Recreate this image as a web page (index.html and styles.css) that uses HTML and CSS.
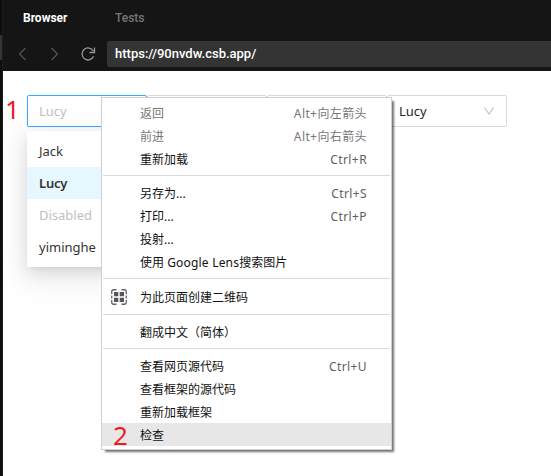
FILE: index.html
```html
<!DOCTYPE html>
<html lang="zh-CN">
<head>
<meta charset="utf-8">
<title>Browser</title>
<link rel="stylesheet" href="styles.css">
</head>
<body>
<div class="edge"><span class="edge-thumb"></span></div>
<div class="pane">
  <header class="chrome">
    <nav class="tabs"><span class="tab active">Browser</span><span class="tab">Tests</span></nav>
    <div class="toolbar">
      <svg class="nav-icon" viewBox="0 0 10 14"><path d="M7.500 1 1.500 7l6 6"/></svg>
      <svg class="nav-icon next" viewBox="0 0 10 14"><path d="M2.500 1 8.500 7l-6 6"/></svg>
      <svg class="reload" viewBox="0 0 16 16"><path d="M13.600 10.300A6 6 0 1 1 13.300 5M14.500 1.500v5H9.500"/></svg>
      <div class="address">https://90nvdw.csb.app/</div>
    </div>
  </header>
  <main class="page">
    <div class="selects">
      <div class="select focused">Lucy</div>
      <div class="select"></div>
      <div class="select"></div>
      <div class="select">Lucy<svg class="arrow" viewBox="0 0 12 10"><path d="M1.500 1.500 6 8l4.500-6.500"/></svg></div>
    </div>
  </main>
</div>
<div class="dropdown">
  <div class="option">Jack</div>
  <div class="option selected">Lucy</div>
  <div class="option disabled">Disabled</div>
  <div class="option">yiminghe</div>
</div>
<div class="menu">
  <div class="item off"><span>返回</span><kbd>Alt+向左箭头</kbd></div>
  <div class="item off"><span>前进</span><kbd>Alt+向右箭头</kbd></div>
  <div class="item"><span>重新加载</span><kbd>Ctrl+R</kbd></div>
  <div class="sep"></div>
  <div class="item"><span>另存为...</span><kbd>Ctrl+S</kbd></div>
  <div class="item"><span>打印...</span><kbd>Ctrl+P</kbd></div>
  <div class="item"><span>投射...</span></div>
  <div class="item"><span>使用 <span class="latin">Google Lens</span>搜索图片</span></div>
  <div class="sep"></div>
  <div class="item tall">
    <svg class="qr" viewBox="0 0 16 16"><path class="frame" d="M.75 5V2.500Q.75.75 2.500.75H5.500M10.500.75h3q1.750 0 1.750 1.750V5M15.250 11v2.500q0 1.750-1.750 1.750H10.500M5.500 15.250H2.500q-1.750 0-1.750-1.750V11M.75 6.500v3M15.250 6.500v3"/><path class="cells" d="M3 3h4.300v4.300H3zM8.700 3H13v4.300H8.700zM3 8.700h4.300V13H3zM8.700 8.700H13V13H8.700z"/></svg>
    <span>为此页面创建二维码</span>
  </div>
  <div class="sep"></div>
  <div class="item"><span>翻成中文（简体）</span></div>
  <div class="sep"></div>
  <div class="item"><span>查看网页源代码</span><kbd>Ctrl+U</kbd></div>
  <div class="item"><span>查看框架的源代码</span></div>
  <div class="item"><span>重新加载框架</span></div>
  <div class="item hover"><span>检查</span></div>
</div>
<span class="mark one">1</span>
<span class="mark two">2</span>
</body>
</html>
```
FILE: styles.css
```css
* { box-sizing: border-box; }
body {
  margin: 0;
  width: 551px;
  height: 476px;
  overflow: hidden;
  position: relative;
  display: flex;
  background: #fff;
  font-family: "Noto Sans", "Noto Sans CJK SC", sans-serif;
}
.edge { width: 3px; flex: none; background: #0d0d0d; border-right: 1px solid #1c1c1c; padding-top: 35px; }
.edge-thumb { display: block; width: 2px; height: 25px; background: #343434; }
.pane { flex: 1; display: flex; flex-direction: column; min-width: 0; }
.chrome { height: 71px; background: #151515; font-family: Roboto, sans-serif; }
.tabs { display: flex; height: 41px; padding-left: 20px; line-height: 36px; font-size: 12px; font-weight: 500; }
.tab { width: 92px; color: #757575; }
.tab.active { color: #fff; font-weight: 700; }
.toolbar { display: flex; align-items: center; height: 26px; padding-left: 15px; }
.nav-icon { width: 10px; height: 14px; fill: none; stroke: #555; stroke-width: 1.2; }
.nav-icon.next { margin-left: 21px; }
.reload { width: 16px; height: 16px; margin: 0 11px 0 21px; fill: none; stroke: #999; stroke-width: 1.3; }
.address {
  flex: 1;
  height: 26px;
  padding-left: 8px;
  border-radius: 2px 0 0 2px;
  background: #343434;
  color: #fff;
  font-size: 13px;
  font-weight: 500;
  line-height: 25px;
}
.page { padding: 24px; }
.selects { display: flex; }
.select {
  width: 120px;
  height: 32px;
  border: 1px solid #d9d9d9;
  border-radius: 2px;
  display: flex;
  align-items: center;
  justify-content: space-between;
  padding: 0 11px;
  font-size: 13px;
  color: #262626;
}
.select.focused { border-color: #40a9ff; color: #bfbfbf; box-shadow: 0 0 2px rgba(24, 144, 255, .2); }
.arrow { width: 12px; height: 10px; fill: none; stroke: #bfbfbf; stroke-width: 1.1; }
.dropdown {
  position: absolute;
  left: 27px;
  top: 131px;
  width: 120px;
  padding: 4px 0;
  border-radius: 2px;
  background: #fff;
  box-shadow: 0 3px 6px -4px rgba(0, 0, 0, .12), 0 6px 16px rgba(0, 0, 0, .1), 0 9px 28px 8px rgba(0, 0, 0, .06);
}
.option { height: 32px; padding-left: 12px; line-height: 32px; font-size: 13px; color: #333; }
.option.selected { background: #e6f7ff; font-weight: 600; letter-spacing: -.2px; }
.option.disabled { color: #bfbfbf; }
.menu {
  position: absolute;
  left: 101px;
  top: 97px;
  width: 291px;
  height: 353px;
  padding-top: 3px;
  border: 1px solid #d0d0d0;
  background: #fff;
  box-shadow: 3px 3px 2px -1px rgba(0, 0, 0, .55);
}
.item {
  display: flex;
  align-items: center;
  height: 23px;
  padding: 2px 24px 0 38px;
  font-size: 12px;
  line-height: 21px;
  color: #111;
  white-space: nowrap;
}
.item.tall { height: 25px; }
.item.hover { background: #e7e7e7; }
.item.off { color: #777; }
.item kbd { margin-left: auto; font: inherit; letter-spacing: .4px; color: #5f6063; }
.item.off kbd { color: #777; }
.latin { letter-spacing: .2px; }
.sep { height: 11px; margin: 0 1px; padding-top: 5px; }
.sep::before { content: ""; display: block; height: 1px; background: #d9dadc; }
.qr { width: 16px; height: 16px; margin: -2px 13px 0 -29px; }
.qr .frame { fill: none; stroke: #626367; stroke-width: 1.3; }
.qr .cells { fill: #55565a; }
.mark { position: absolute; color: #ed1c24; font-size: 26px; line-height: 30px; }
.mark.one { left: 5px; top: 94px; }
.mark.two { left: 113px; top: 420px; }
```
